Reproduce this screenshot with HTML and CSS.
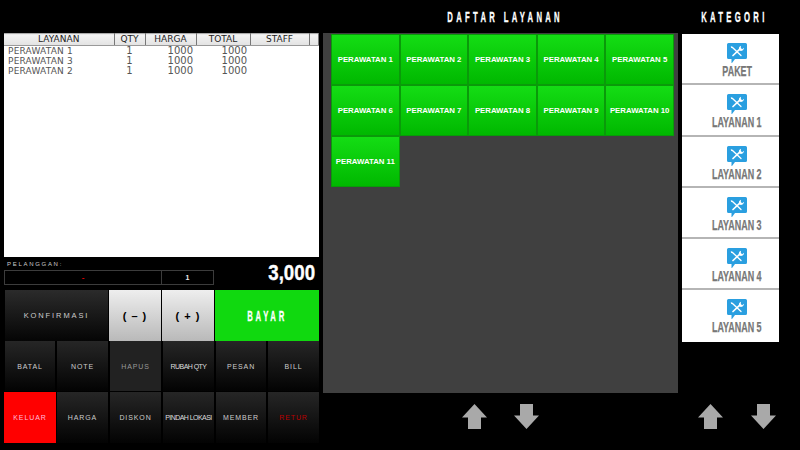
FILE: index.html
```html
<!DOCTYPE html>
<html lang="id">
<head>
<meta charset="utf-8">
<title>Kasir</title>
<link rel="stylesheet" href="styles.css">
</head>
<body>
<svg class="defs" width="0" height="0" aria-hidden="true">
  <symbol id="tool" viewBox="0 0 20 21">
    <path d="M1.500 0H18.500A1.500 1.500 0 0 1 20 1.500V14.500A1.500 1.500 0 0 1 18.500 16H8L5 20H4.500V16H1.500A1.500 1.500 0 0 1 0 14.500V1.500A1.500 1.500 0 0 1 1.500 0Z" fill="#2a9fe0"/>
    <path d="M5.500 4.500L14 12.500" stroke="#fff" stroke-width="1.300" stroke-linecap="round"/>
    <path d="M12.800 6.200L6 12.500" stroke="#fff" stroke-width="1.700" stroke-linecap="round"/>
    <path d="M14 2.800L13.800 5L15.200 6.200L17 4.800A3 3 0 0 1 12.500 7.500L11.800 6A3 3 0 0 1 14 2.800Z" fill="#fff"/>
    <path d="M3.800 3L5.800 4L5.200 5.200L4 4.800Z" fill="#fff"/>
  </symbol>
  <symbol id="up" viewBox="0 0 25 25"><path d="M12.500 0L25 13.500H19V25H6V13.500H0Z" fill="#a9a9a9"/></symbol>
  <symbol id="down" viewBox="0 0 25 25"><path d="M12.500 25L25 11.500H19V0H6V11.500H0Z" fill="#a9a9a9"/></symbol>
</svg>
<div class="app">
  <section class="left">
    <div class="table-box">
      <table class="order">
        <colgroup><col class="c1"><col class="c2"><col class="c3"><col class="c4"><col class="c5"><col></colgroup>
        <thead><tr><th>LAYANAN</th><th>QTY</th><th>HARGA</th><th>TOTAL</th><th>STAFF</th><th></th></tr></thead>
        <tbody>
          <tr><td>PERAWATAN 1</td><td class="mid">1</td><td class="num">1000</td><td class="num">1000</td><td></td><td></td></tr>
          <tr><td>PERAWATAN 3</td><td class="mid">1</td><td class="num">1000</td><td class="num">1000</td><td></td><td></td></tr>
          <tr><td>PERAWATAN 2</td><td class="mid">1</td><td class="num">1000</td><td class="num">1000</td><td></td><td></td></tr>
        </tbody>
      </table>
    </div>
    <div class="customer">
      <div class="cust-info">
        <div class="cust-label">PELANGGAN:</div>
        <div class="cust-fields"><div class="cust-name">-</div><div class="cust-qty">1</div></div>
      </div>
      <div class="grand"><span class="grand-text">3,000</span></div>
    </div>
    <div class="actions">
      <button class="btn konf">KONFIRMASI</button>
      <button class="btn light">( – )</button>
      <button class="btn light">( + )</button>
      <button class="btn pay"><span class="squeeze">BAYAR</span></button>
    </div>
    <div class="keys">
      <button class="btn key">BATAL</button>
      <button class="btn key">NOTE</button>
      <button class="btn key flat">HAPUS</button>
      <button class="btn key tight">RUBAH QTY</button>
      <button class="btn key">PESAN</button>
      <button class="btn key">BILL</button>
      <button class="btn key exit">KELUAR</button>
      <button class="btn key">HARGA</button>
      <button class="btn key">DISKON</button>
      <button class="btn key tight">PINDAH LOKASI</button>
      <button class="btn key">MEMBER</button>
      <button class="btn key retur">RETUR</button>
    </div>
  </section>
  <section class="middle">
    <h1 class="title services-title"><span class="squeeze">DAFTAR LAYANAN</span></h1>
    <div class="panel">
      <button class="tile">PERAWATAN 1</button>
      <button class="tile">PERAWATAN 2</button>
      <button class="tile">PERAWATAN 3</button>
      <button class="tile">PERAWATAN 4</button>
      <button class="tile">PERAWATAN 5</button>
      <button class="tile">PERAWATAN 6</button>
      <button class="tile">PERAWATAN 7</button>
      <button class="tile">PERAWATAN 8</button>
      <button class="tile">PERAWATAN 9</button>
      <button class="tile">PERAWATAN 10</button>
      <button class="tile">PERAWATAN 11</button>
    </div>
    <div class="pager mid-pager">
      <svg class="arrow"><use href="#up"/></svg>
      <svg class="arrow"><use href="#down"/></svg>
    </div>
  </section>
  <section class="right">
    <h2 class="title cat-title"><span class="squeeze">KATEGORI</span></h2>
    <div class="cats">
      <div class="cat"><svg class="cat-icon"><use href="#tool"/></svg><span class="cat-name">PAKET</span></div>
      <div class="cat"><svg class="cat-icon"><use href="#tool"/></svg><span class="cat-name">LAYANAN 1</span></div>
      <div class="cat"><svg class="cat-icon"><use href="#tool"/></svg><span class="cat-name">LAYANAN 2</span></div>
      <div class="cat"><svg class="cat-icon"><use href="#tool"/></svg><span class="cat-name">LAYANAN 3</span></div>
      <div class="cat"><svg class="cat-icon"><use href="#tool"/></svg><span class="cat-name">LAYANAN 4</span></div>
      <div class="cat"><svg class="cat-icon"><use href="#tool"/></svg><span class="cat-name">LAYANAN 5</span></div>
    </div>
    <div class="pager right-pager">
      <svg class="arrow"><use href="#up"/></svg>
      <svg class="arrow"><use href="#down"/></svg>
    </div>
  </section>
</div>
</body>
</html>
```
FILE: styles.css
```css
* { box-sizing: border-box; }
html, body { margin: 0; padding: 0; background: #000; }
body { width: 800px; height: 450px; overflow: hidden; font-family: "Liberation Sans", sans-serif; }
.defs { position: absolute; }
.app { display: flex; width: 800px; height: 450px; }
button { font-family: inherit; border: 0; padding: 0; margin: 0; }
.squeeze { display: inline-block; flex: none; transform: scaleX(.55); white-space: nowrap; -webkit-text-stroke: .3px currentColor; }

.left { width: 323px; padding: 33px 4px 0 4px; display: flex; flex-direction: column; }
.table-box { height: 224px; background: #fff; }
.order { width: 100%; border-collapse: collapse; table-layout: fixed; font-family: "DejaVu Sans", sans-serif; font-size: 9px; color: #555; }
.c1 { width: 110px; } .c2 { width: 31px; } .c3 { width: 51px; } .c4 { width: 54px; } .c5 { width: 59px; }
.order th { height: 12px; padding: 0; font-weight: 400; font-size: 9px; line-height: 11px; color: #222; background: linear-gradient(#f4f4f4, #e2e2e2); border-right: 1px solid #777; border-bottom: 1px solid #999; border-top: 1px solid #aaa; }
.order td { height: 10px; padding: 0 0 0 4px; line-height: 10px; white-space: nowrap; letter-spacing: .2px; }
.order .mid { text-align: center; padding: 0; font-size: 10px; }
.order .num { text-align: right; padding: 0 3px 0 0; font-size: 10px; letter-spacing: 0; }

.customer { height: 33px; display: flex; }
.cust-info { width: 210px; }
.cust-label { height: 13px; padding: 3px 0 0 3px; font-size: 6px; line-height: 8px; letter-spacing: 1.700px; color: #ccc; }
.cust-fields { display: flex; height: 15px; border: 1px solid #3c3c3c; }
.cust-name { width: 157px; border-right: 1px solid #3c3c3c; color: #e00; font-size: 8px; font-weight: 700; line-height: 14px; text-align: center; }
.cust-qty { flex: 1; color: #eee; font-size: 7px; font-weight: 700; line-height: 13px; text-align: center; }
.grand { flex: 1; padding: 5px 4px 0 0; text-align: right; color: #fff; font-weight: 700; font-size: 22px; line-height: 22px; }
.grand-text { display: inline-block; transform: scaleX(.85); transform-origin: right center; -webkit-text-stroke: .4px #fff; }

.btn { display: block; letter-spacing: .9px; font-size: 7px; color: #ccc; text-align: center; white-space: nowrap; overflow: hidden; }
.actions { display: grid; grid-template-columns: 103px 52px 52px 104px; gap: 0 1px; height: 51px; margin-left: 1px; }
.konf { background: linear-gradient(#2b2b2b, #050505); letter-spacing: 1.900px; font-size: 7.500px; }
.light { background: linear-gradient(#eee, #b9b9b9); color: #000; font-size: 11px; font-weight: 700; letter-spacing: 1px; }
.pay { background: #10d90f; color: #fff; font-size: 14px; font-weight: 700; letter-spacing: 5px; }
.keys { display: grid; grid-template-columns: 50px 51px 51px 51px 50px 51px; grid-template-rows: 50px 51px; gap: 1px 2px; margin-left: 1px; }
.key { background: linear-gradient(#262626, #030303); }
.flat { background: #222; color: #999; }
.tight { letter-spacing: -.55px; font-size: 7px; color: #ddd; }
.exit { background: #f00; color: #fbd; margin-left: -1px; width: 52px; }
.retur { color: #b00; }

.middle { width: 359px; display: flex; flex-direction: column; }
.title { margin: 0; height: 33px; display: flex; justify-content: center; color: #fff; font-size: 14px; font-weight: 700; line-height: 34px; letter-spacing: 6px; }
.services-title { width: 359px; padding-left: 5px; }
.panel { width: 355px; height: 360px; background: #404040; padding: 1px 3px 0 8px; display: grid; grid-template-columns: repeat(5, 68.600px); grid-auto-rows: 51px; align-content: start; }
.tile { background: linear-gradient(#14dd14, #00b800); border: 1px solid #0a9a0a; color: #fff; font-size: 7.800px; font-weight: 700; white-space: nowrap; overflow: hidden; }
.pager { display: flex; }
.arrow { width: 25px; height: 25px; display: block; }
.mid-pager { padding: 11px 0 0 139px; gap: 27px; }

.right { width: 118px; display: flex; flex-direction: column; }
.cat-title { width: 105px; }
.cats { width: 97px; margin-top: 1px; }
.cat { height: 51.300px; background: #fff; border-bottom: 2px solid #b5b5b5; display: flex; flex-direction: column; align-items: center; padding: 9px 0 0 13px; color: #777; font-size: 14px; font-weight: 700; line-height: 15px; }
.cat:last-child { border-bottom: 0; }
.cat-icon { width: 20px; height: 21px; display: block; flex: none; }
.cat-name { display: block; flex: none; transform: scaleX(.64); white-space: nowrap; -webkit-text-stroke: .25px #777; }
.right-pager { padding: 62px 0 0 16px; gap: 28px; }
```
